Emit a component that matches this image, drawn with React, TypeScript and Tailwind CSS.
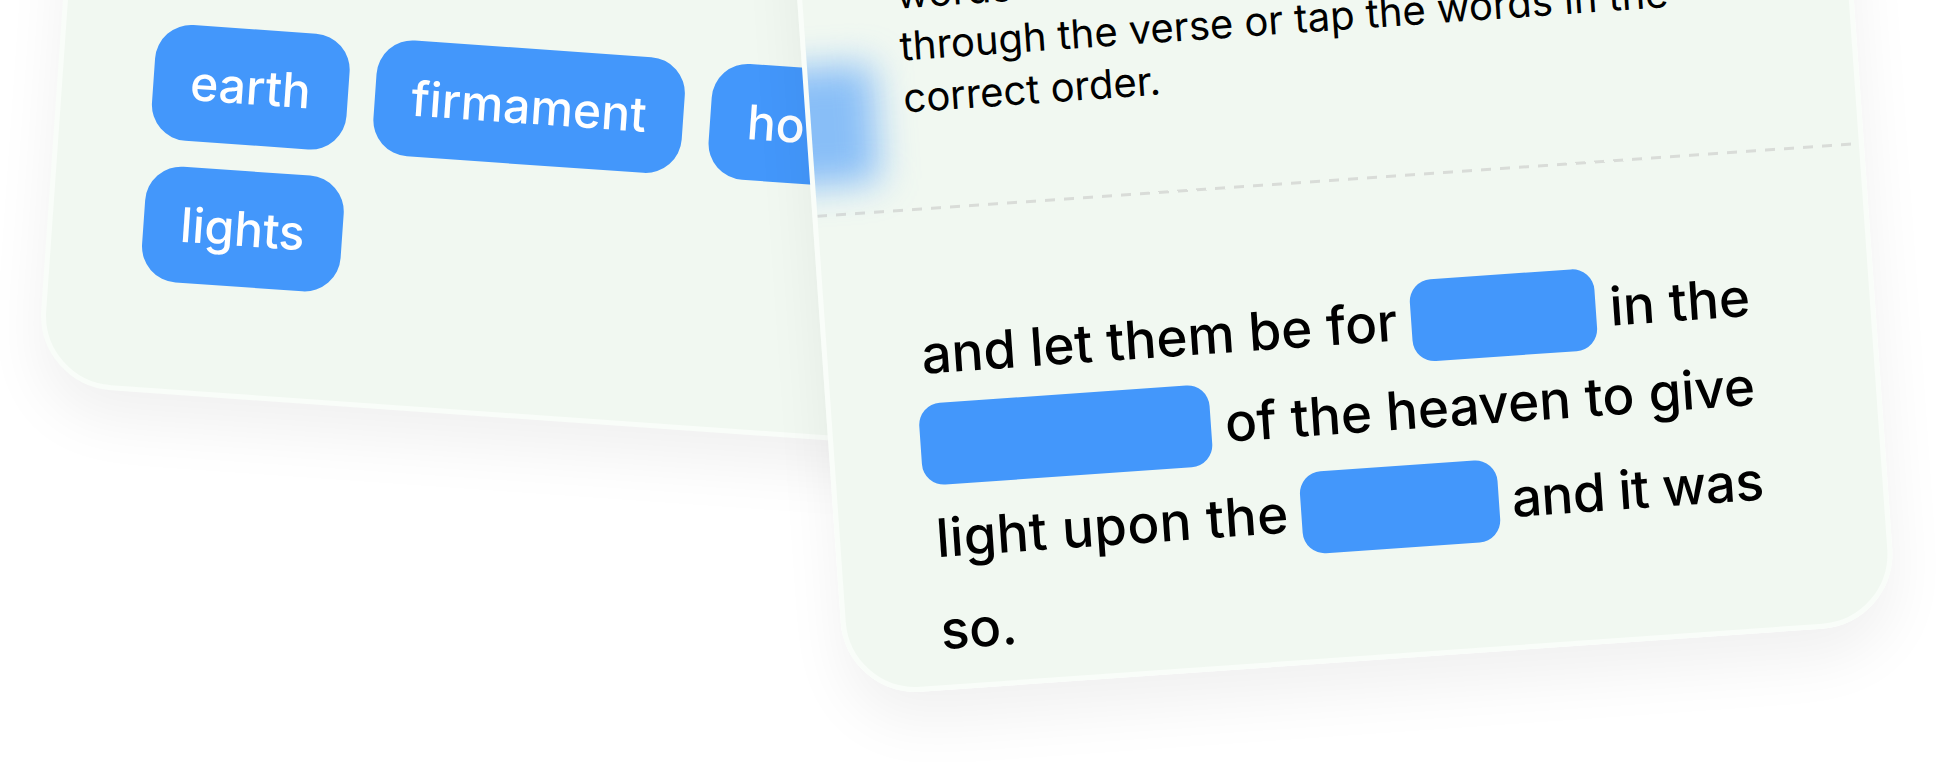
const font = '[font-family:Inter,"Liberation_Sans",sans-serif]'

function Chip({ label }: { label: string }) {
  return (
    <div className="h-[116px] px-[37px] flex items-center rounded-[36px] bg-[#4397fb] text-white text-[48px] font-medium">
      {label}
    </div>
  )
}

function Blank({ width }: { width: string }) {
  return <div className={`h-[82px] rounded-[22px] bg-[#4397fb] ${width}`}></div>
}

export default function App() {
  return (
    <div className={`relative w-[1959px] h-[762px] overflow-hidden bg-white ${font}`}>
      {/* word bank card */}
      <div className="absolute left-[36px] top-[-315px] w-[1000px] h-[700px] origin-bottom-left rotate-[4deg] rounded-b-[75px] border-[5px] border-[#f9fdf9] bg-[#f1f8f1] shadow-[0_30px_60px_rgba(0,0,0,0.06)]">
        <div className="pl-[91px] pt-[325px] w-[900px] flex flex-wrap gap-x-[27px] gap-y-[26px]">
          <Chip label="earth" />
          <Chip label="firmament" />
          <Chip label="hours" />
          <Chip label="lights" />
        </div>
      </div>

      {/* verse card */}
      <div className="absolute left-[846px] top-[-203px] w-[1054px] h-[900px] origin-bottom-left rotate-[-4deg] rounded-b-[75px] shadow-[0_30px_60px_rgba(0,0,0,0.06)]">
        <div className="relative w-full h-full flex flex-col overflow-hidden rounded-b-[75px] border-[5px] border-[#f9fdf9] bg-[#f1f8f1] text-black">
          <div className="absolute left-[-60px] top-[265px] w-[125px] h-[118px] bg-[#4397fb]/60 blur-[18px]"></div>
          <p className="relative pl-[94px] pt-[172px] text-[40px] leading-[52px]">
            words to fill each blank. Scroll
            <br />
            through the verse or tap the words in the
            <br />
            correct order.
          </p>
          <div className="mt-[84px] h-[3px] bg-[repeating-linear-gradient(90deg,#d9dcd8_0_10px,transparent_10px_19px)]"></div>
          <div className="mt-[99px] pl-[94px] flex flex-col text-[53px] font-medium">
            <div className="h-[92px] flex items-center gap-x-[14px]">
              <span>and let them be for</span>
              <Blank width="w-[185px]" />
              <span>in the</span>
            </div>
            <div className="h-[92px] pb-[6px] flex items-center gap-x-[14px] -ml-[7px]">
              <Blank width="w-[291px]" />
              <span>of the heaven to give</span>
            </div>
            <div className="h-[92px] flex items-center gap-x-[13px] ml-[2px]">
              <span className="tracking-[0.4px]">light upon the</span>
              <Blank width="w-[198px]" />
              <span className="tracking-[-0.5px]">and it was</span>
            </div>
            <div className="h-[92px] flex items-center">
              <span>so.</span>
            </div>
          </div>
        </div>
      </div>
    </div>
  )
}
